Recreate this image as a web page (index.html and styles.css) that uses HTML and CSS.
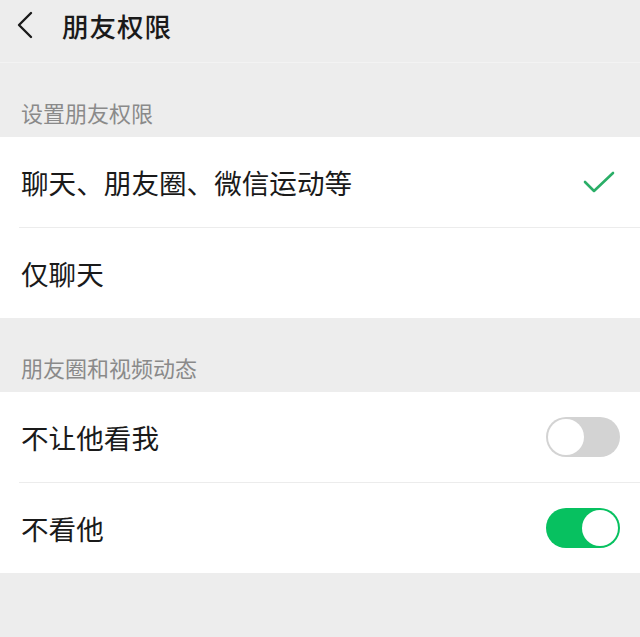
FILE: index.html
```html
<!DOCTYPE html>
<html lang="zh-CN">
<head>
  <meta charset="UTF-8" />
  <meta name="viewport" content="width=device-width, initial-scale=1.0" />
  <title>朋友权限</title>
  <link rel="stylesheet" href="styles.css">
</head>
<body>
  <div class="header">
    <svg class="back" width="18" height="30" viewBox="0 0 18 30">
      <path d="M15 3 L3 15 L15 27" fill="none" stroke="#1a1a1a" stroke-width="2.4" stroke-linecap="round" stroke-linejoin="round"/>
    </svg>
    <h1>朋友权限</h1>
  </div>

  <div class="group-title">设置朋友权限</div>
  <div class="list">
    <div class="row">
      <span>聊天、朋友圈、微信运动等</span>
      <svg class="check" width="34" height="26" viewBox="0 0 34 26">
        <path d="M3 13 L12 22 L31 4" fill="none" stroke="#2aae67" stroke-width="2.6" stroke-linecap="round" stroke-linejoin="round"/>
      </svg>
    </div>
    <div class="row">
      <span>仅聊天</span>
    </div>
  </div>

  <div class="group-title">朋友圈和视频动态</div>
  <div class="list">
    <div class="row">
      <span>不让他看我</span>
      <div class="switch"><div class="knob"></div></div>
    </div>
    <div class="row">
      <span>不看他</span>
      <div class="switch on"><div class="knob"></div></div>
    </div>
  </div>
</body>
</html>
```

FILE: styles.css
```css
body {
  margin: 0;
  font-family: "Noto Sans CJK SC", "Noto Sans", sans-serif;
  background: #ededed;
  color: #1a1a1a;
}
.header {
  height: 63px;
  display: flex;
  align-items: center;
  padding-left: 16px;
  border-bottom: 1px solid #f3f3f3;
  box-sizing: border-box;
  padding-bottom: 12px;
}
.back {
  display: block;
}
.header h1 {
  margin: 0 0 0 28px;
  font-size: 26.5px;
  font-weight: 500;
  letter-spacing: 1px;
}
.group-title {
  height: 74px;
  box-sizing: border-box;
  padding: 24px 0 0 21px;
  display: flex;
  align-items: center;
  font-size: 22px;
  color: #8a8a8a;
}
.list {
  background: #fff;
}
.row {
  height: 90px;
  display: flex;
  align-items: center;
  justify-content: space-between;
  padding: 0 20px 0 21px;
  font-size: 27.6px;
}
.row + .row {
  border-top: 1px solid #ececec;
  margin-left: 19px;
  padding-left: 2px;
}
.check {
  margin-right: 4px;
  display: block;
}
.switch {
  width: 74px;
  height: 40px;
  border-radius: 20px;
  background: #d3d3d3;
  box-sizing: border-box;
  padding: 2px;
  display: flex;
}
.switch .knob {
  width: 36px;
  height: 36px;
  border-radius: 50%;
  background: #fff;
}
.switch.on {
  background: #07c160;
  justify-content: flex-end;
}
```
